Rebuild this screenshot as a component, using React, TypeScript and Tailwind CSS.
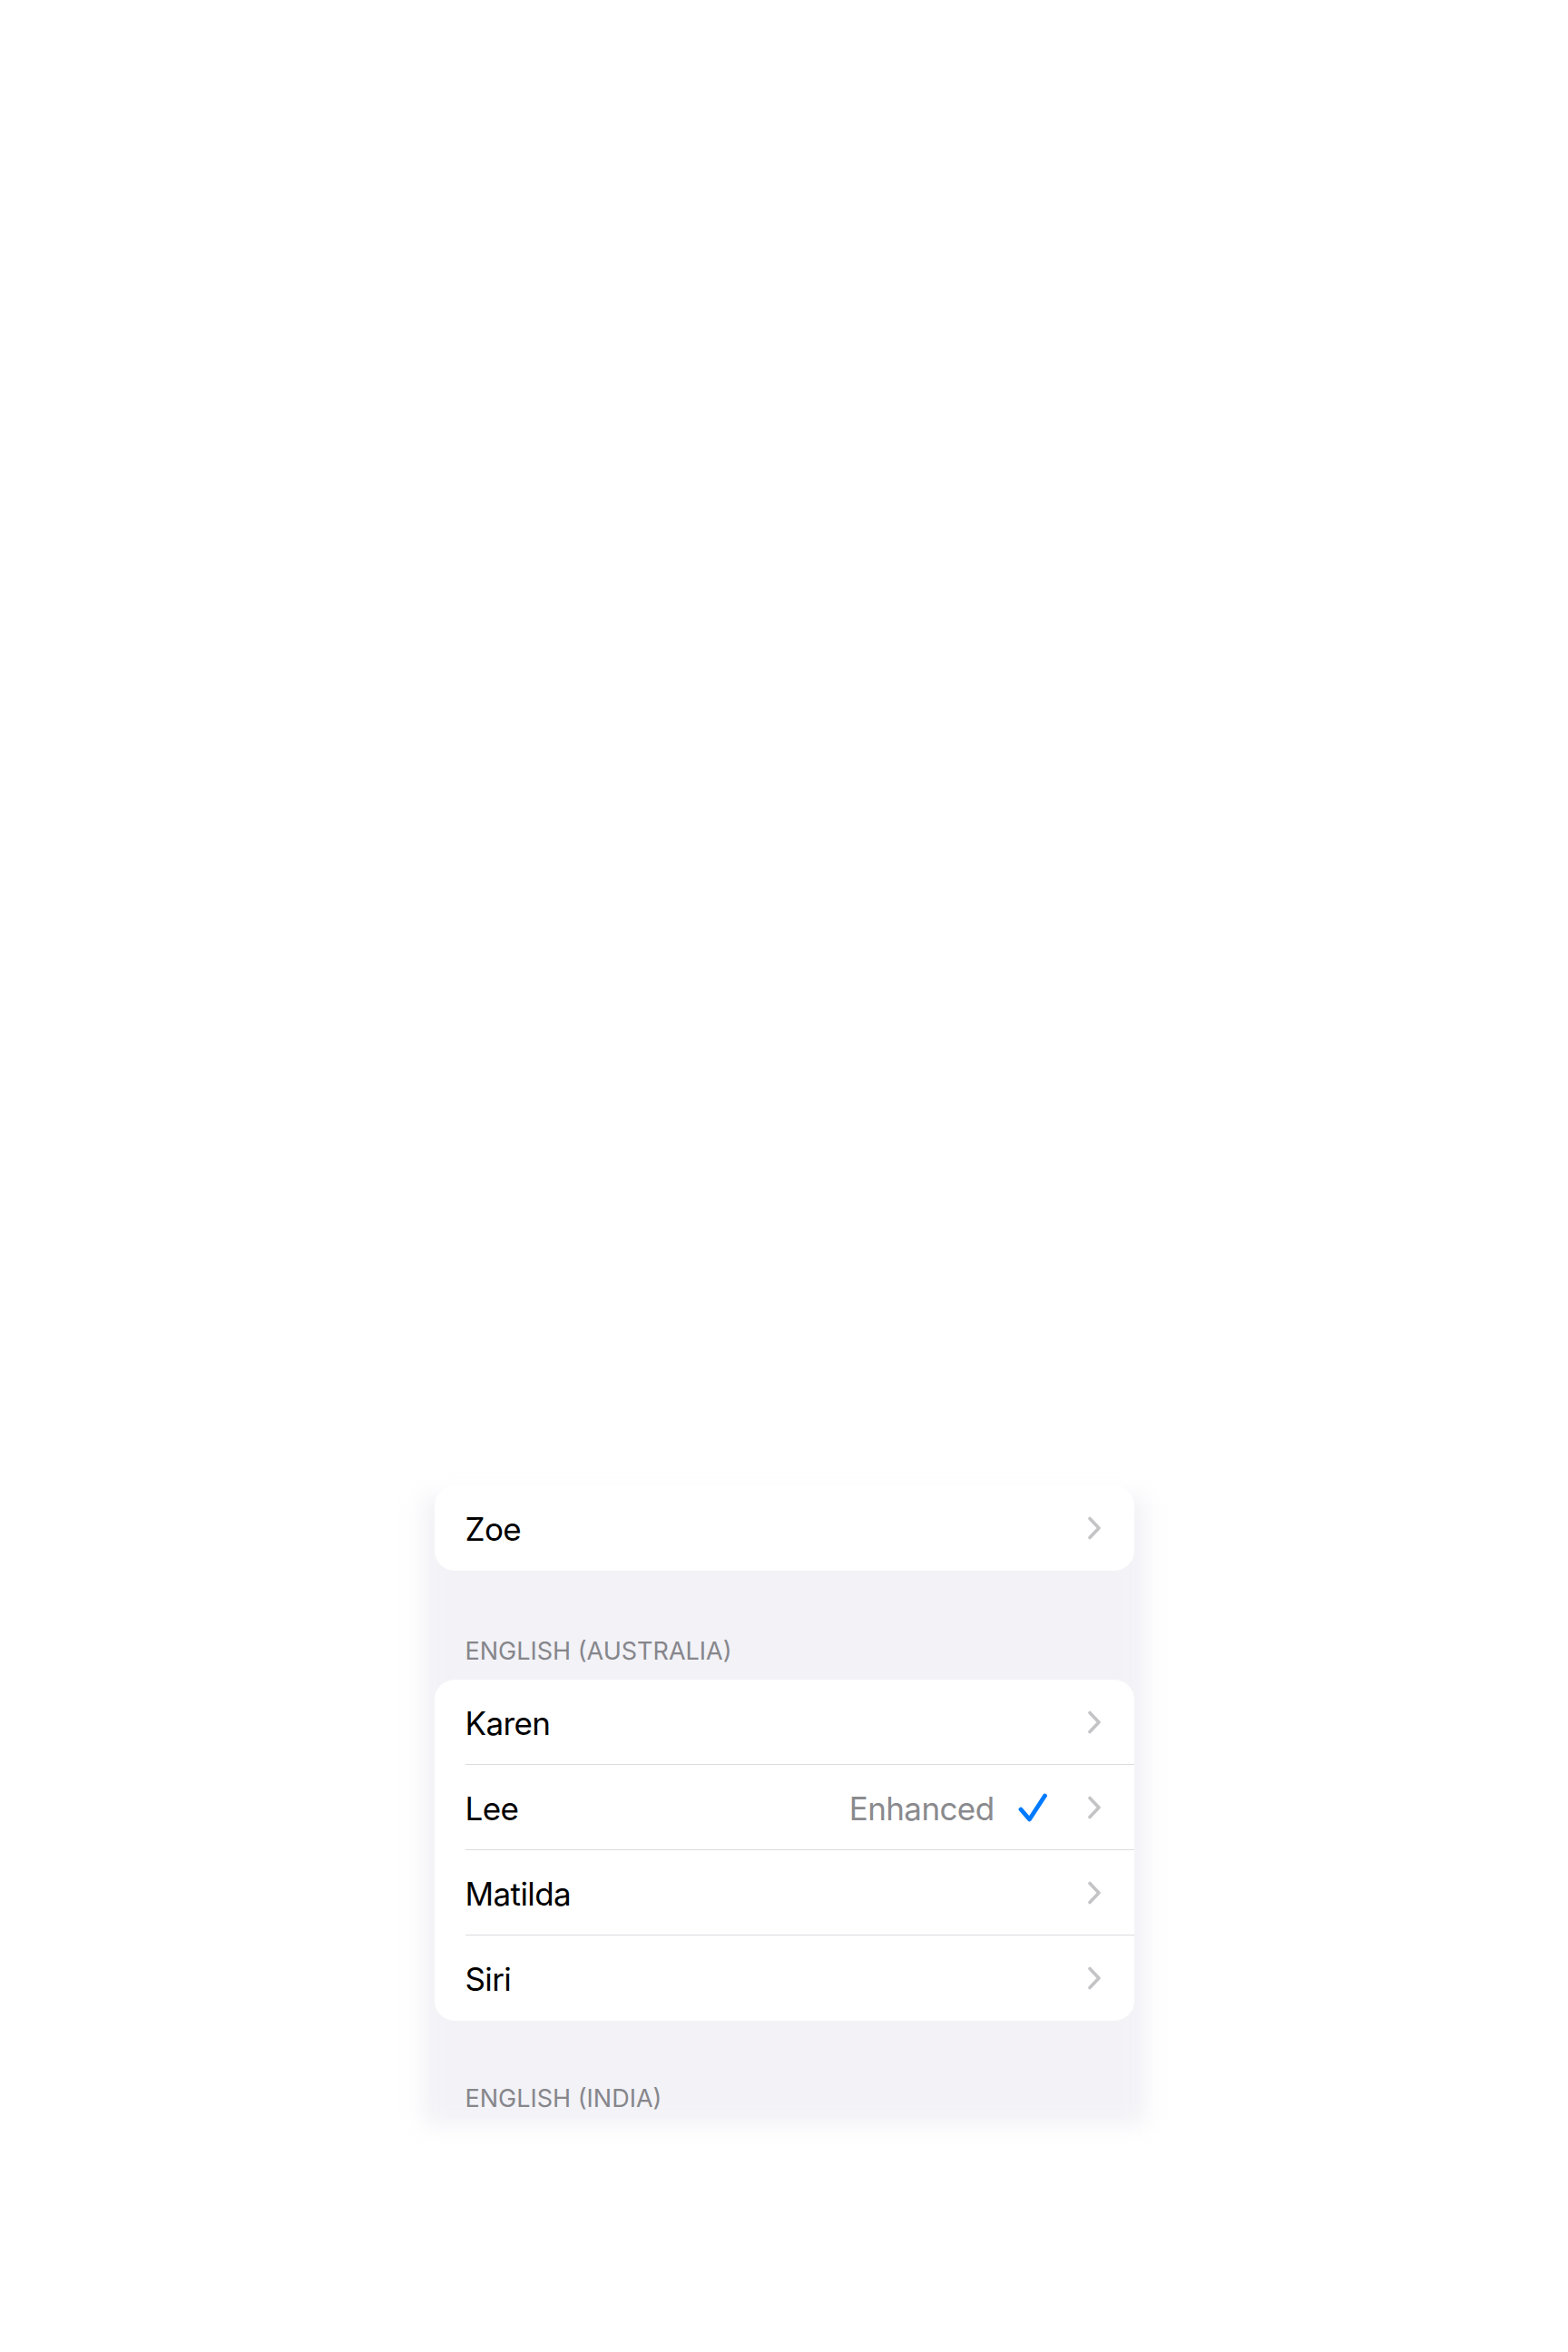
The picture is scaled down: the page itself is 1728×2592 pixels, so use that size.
import React from 'react';

const font = { fontFamily: 'Inter, "Noto Sans", sans-serif' };

type Voice = { name: string; detail?: string; selected?: boolean };

const Chevron = () => (
    <svg width="16" height="26" viewBox="0 0 16 26" fill="none" className="shrink-0">
        <path d="M3 2.5 L13 13 L3 23.5" stroke="#c4c4c7" strokeWidth="3.6" strokeLinecap="round" strokeLinejoin="round" />
    </svg>
);

const Check = () => (
    <svg width="32" height="32" viewBox="0 0 32 32" fill="none" className="shrink-0">
        <path d="M3 18 L12.5 29 L29.5 3" stroke="#007aff" strokeWidth="4.8" strokeLinecap="round" strokeLinejoin="round" />
    </svg>
);

const Row: React.FC<{ voice: Voice; last: boolean }> = ({ voice, last }) => (
    <div className="flex h-[94px] items-stretch pl-[34px]">
        <div className={`flex flex-1 items-center pr-[36px] ${last ? '' : 'border-b border-[#dcdce0]'}`}>
            <span className="flex-1 pt-[3px] text-[35px] leading-none tracking-[-0.6px] text-black">{voice.name}</span>
            {voice.detail && (
                <span className="mr-[26px] pt-[3px] text-[35px] leading-none tracking-[-0.6px] text-[#8a8a8e]">{voice.detail}</span>
            )}
            {voice.selected && (
                <span className="mr-[44px] flex">
                    <Check />
                </span>
            )}
            <Chevron />
        </div>
    </div>
);

const Group: React.FC<{ voices: Voice[] }> = ({ voices }) => (
    <div className="overflow-hidden rounded-[22px] bg-white">
        {voices.map((v, i) => (
            <Row key={v.name} voice={v} last={i === voices.length - 1} />
        ))}
    </div>
);

const Header: React.FC<{ title: string; className?: string }> = ({ title, className }) => (
    <div className={`pl-[34px] text-[27px] leading-[34px] text-[#86868b] ${className ?? ''}`}>{title}</div>
);

export default function App() {
    return (
        <div className="min-h-[2592px] w-full bg-white" style={font}>
            <div className="pt-[1637px]">
                <div className="relative mx-auto w-[797px]">
                    <div className="absolute inset-x-0 top-[12px] bottom-0 bg-[#f2f2f7] blur-[12px]" />
                    <div className="relative px-[13px] pb-[12px]">
                        <Group voices={[{ name: 'Zoe' }]} />
                        <Header title="ENGLISH (AUSTRALIA)" className="mt-[72px] mb-[14px]" />
                        <Group
                            voices={[
                                { name: 'Karen' },
                                { name: 'Lee', detail: 'Enhanced', selected: true },
                                { name: 'Matilda' },
                                { name: 'Siri' },
                            ]}
                        />
                        <Header title="ENGLISH (INDIA)" className="mt-[69px]" />
                    </div>
                </div>
            </div>
        </div>
    );
}
